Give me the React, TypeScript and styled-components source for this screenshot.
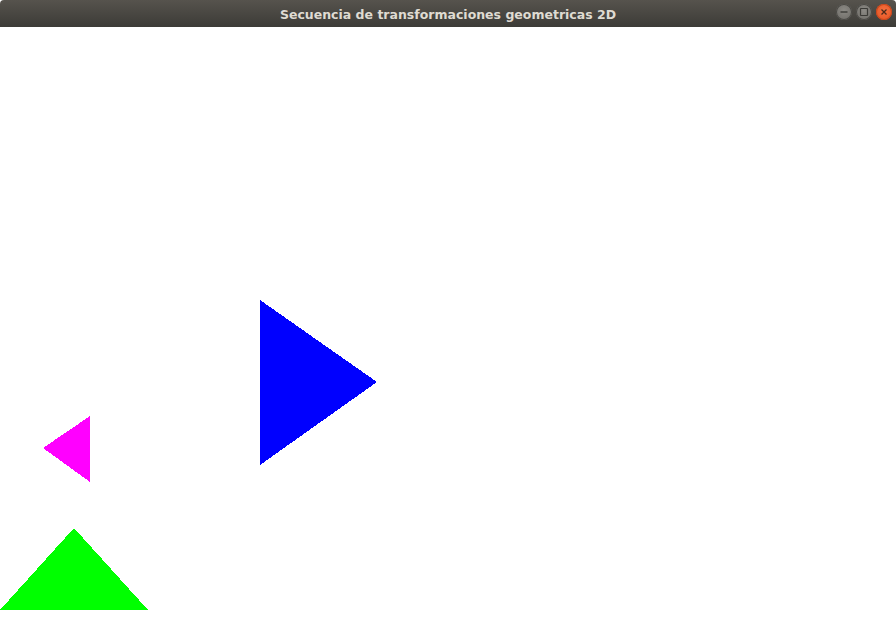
import React from "react";
import styled, { createGlobalStyle } from "styled-components";

const Global = createGlobalStyle`
  html, body { margin: 0; padding: 0; background: #ffffff; }
  body { width: 896px; height: 623px; overflow: hidden; }
`;

const Window = styled.div`
  width: 896px;
  height: 623px;
  display: flex;
  flex-direction: column;
  background: #ffffff;
`;

const TitleBar = styled.div`
  height: 27px;
  flex: none;
  position: relative;
  display: flex;
  align-items: center;
  justify-content: center;
  background: linear-gradient(#56534d, #3c3b37);
  border-radius: 4px 4px 0 0;
`;

const Title = styled.span`
  font-family: "DejaVu Sans", "Noto Sans", sans-serif;
  font-weight: bold;
  font-size: 12.5px;
  color: #dfdbd2;
  letter-spacing: 0px;
  padding-top: 1px;
`;

const Controls = styled.div`
  position: absolute;
  right: 4px;
  top: 4px;
  display: flex;
  gap: 4px;
`;

const Btn = styled.div<{ $close?: boolean }>`
  width: 16px;
  height: 16px;
  border-radius: 50%;
  display: flex;
  align-items: center;
  justify-content: center;
  background: ${(p) =>
    p.$close
      ? "radial-gradient(circle at 50% 40%, #f4703f, #e2501f)"
      : "radial-gradient(circle at 50% 40%, #8c8a85, #6a6863)"};
  box-shadow: inset 0 0 0 1px ${(p) => (p.$close ? "#c6461c" : "#4a4945")};
`;

const Canvas = styled.div`
  flex: 1;
  background: #ffffff;
`;

export default function App() {
  return (
    <>
      <Global />
      <Window>
        <TitleBar>
          <Title>Secuencia de transformaciones geometricas 2D</Title>
          <Controls>
            <Btn>
              <svg width="16" height="16" viewBox="0 0 16 16">
                <line x1="4.5" y1="8" x2="11.5" y2="8" stroke="#3c3b37" strokeWidth="1.4" />
              </svg>
            </Btn>
            <Btn>
              <svg width="16" height="16" viewBox="0 0 16 16">
                <rect x="4.5" y="4.5" width="7" height="7" fill="none" stroke="#3c3b37" strokeWidth="1.2" rx="0.5" />
              </svg>
            </Btn>
            <Btn $close>
              <svg width="16" height="16" viewBox="0 0 16 16">
                <path d="M5.5 5.5 L10.5 10.5 M10.5 5.5 L5.5 10.5" stroke="#4a2a1a" strokeWidth="1.3" />
              </svg>
            </Btn>
          </Controls>
        </TitleBar>
        <Canvas>
          <svg width="896" height="596" viewBox="0 27 896 596" shapeRendering="crispEdges">
            <polygon points="260,300 377,382 260,465" fill="#0000ff" />
            <polygon points="43,448 90,416 90,482" fill="#ff00ff" />
            <polygon points="74,528 148,610 0,610" fill="#00ff00" />
          </svg>
        </Canvas>
      </Window>
    </>
  );
}
